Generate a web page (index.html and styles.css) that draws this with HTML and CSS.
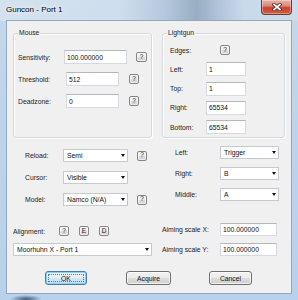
FILE: index.html
```html
<!DOCTYPE html>
<html>
<head>
<meta charset="utf-8">
<title>Guncon - Port 1</title>
<link rel="stylesheet" href="styles.css">
</head>
<body>
<div class="window">
  <div class="titlebar">
    <span class="title">Guncon - Port 1</span>
    <div class="close">
      <svg width="10" height="8" viewBox="0 0 10 8">
        <path d="M2 1.5 L8 6.5 M8 1.5 L2 6.5" stroke="#5a2a22" stroke-width="3.4" stroke-linecap="square" fill="none"/>
        <path d="M2 1.5 L8 6.5 M8 1.5 L2 6.5" stroke="#ffffff" stroke-width="1.7" stroke-linecap="square" fill="none"/>
      </svg>
    </div>
  </div>
  <div class="client">
    <div class="groups">
      <div class="group mouse">
        <span class="legend">Mouse</span>
        <div class="rows rows-mouse">
          <div class="row h14"><span class="lbl lw46">Sensitivity:</span><div class="edit w63">100.000000</div><div class="q q-wide ml9">?</div></div>
          <div class="row h14"><span class="lbl lw48">Threshold:</span><div class="edit w53">512</div><div class="q ml10">?</div></div>
          <div class="row h14"><span class="lbl lw48">Deadzone:</span><div class="edit w53">0</div><div class="q ml10">?</div></div>
        </div>
      </div>
      <div class="group lightgun">
        <span class="legend">Lightgun</span>
        <div class="rows rows-light">
          <div class="row h14"><span class="lbl lw36">Edges:</span><div class="q ml14">?</div></div>
          <div class="row h14"><span class="lbl lw36">Left:</span><div class="edit w40">1</div></div>
          <div class="row h14"><span class="lbl lw36">Top:</span><div class="edit w40">1</div></div>
          <div class="row h14"><span class="lbl lw36">Right:</span><div class="edit w40">65534</div></div>
          <div class="row h14"><span class="lbl lw36">Bottom:</span><div class="edit w40">65534</div></div>
        </div>
      </div>
    </div>

    <div class="lower">
      <div class="block-left">
        <div class="row h13"><span class="lbl lw38">Reload:</span><div class="combo w65"><span>Semi</span><span class="arr"></span></div><div class="q ml9">?</div></div>
        <div class="row h13"><span class="lbl lw38">Cursor:</span><div class="combo w65"><span>Visible</span><span class="arr"></span></div></div>
        <div class="row h13"><span class="lbl lw38">Model:</span><div class="combo w65"><span>Namco (N/A)</span><span class="arr"></span></div><div class="q ml9">?</div></div>
      </div>
      <div class="block-right">
        <div class="row h13"><span class="lbl lw45">Left:</span><div class="combo w59"><span>Trigger</span><span class="arr"></span></div></div>
        <div class="row h13"><span class="lbl lw45">Right:</span><div class="combo w59"><span>B</span><span class="arr"></span></div></div>
        <div class="row h13"><span class="lbl lw45">Middle:</span><div class="combo w59"><span>A</span><span class="arr"></span></div></div>
      </div>

      <div class="align-row">
        <span class="lbl lw46">Alignment:</span>
        <div class="q">?</div>
        <div class="q ml10">E</div>
        <div class="q ml10">D</div>
      </div>
      <div class="row h13 rowb"><span class="lbl lw58">Aiming scale X:</span><div class="edit w57">100.000000</div></div>

      <div class="combo w139 rowc"><span>Moorhuhn X - Port 1</span><span class="arr"></span></div>
      <div class="row h13 rowc"><span class="lbl lw58">Aiming scale Y:</span><div class="edit w57">100.000000</div></div>
    </div>

    <div class="buttons">
      <div class="btn btn-default w42"><span class="focus">OK</span></div>
      <div class="btn w45 ml39">Acquire</div>
      <div class="btn w43 ml38">Cancel</div>
    </div>
  </div>
</div>
</body>
</html>
```

FILE: styles.css
```css
* { box-sizing: border-box; }
html, body { margin: 0; padding: 0; }
body {
  width: 298px;
  height: 300px;
  overflow: hidden;
  font-family: "Liberation Sans", Arial, sans-serif;
  background: #bed5ec;
}

.window {
  width: 298px;
  height: 300px;
  padding: 0 7px 7px 7px;
  display: flex;
  flex-direction: column;
  background:
    radial-gradient(ellipse 16px 4px at 26px 299px, rgba(30, 50, 85, 0.75), rgba(30, 50, 85, 0) 100%),
    linear-gradient(180deg, #c6d8ea 0%, #bdd4ec 40%, #b8d1ec 100%);
}

.titlebar {
  height: 21px;
  margin: 0 -7px;
  padding: 0 6px 0 6px;
  display: flex;
  justify-content: space-between;
  align-items: flex-start;
  background: linear-gradient(90deg,
    rgba(255,255,255,0.25) 0%,
    rgba(255,255,255,0.15) 40%,
    rgba(70,95,125,0.12) 55%,
    rgba(50,75,105,0.30) 66%,
    rgba(70,95,125,0.15) 74%,
    rgba(255,255,255,0.05) 82%,
    rgba(255,255,255,0.1) 100%);
}

.title {
  font-size: 8px;
  line-height: 8px;
  margin-top: 6px;
  color: #000;
  text-shadow: 0 0 4px #fff, 0 0 6px #fff;
  white-space: nowrap;
}

.close {
  width: 31px;
  height: 15px;
  border: 1px solid #6a3a33;
  border-top: none;
  border-radius: 0 0 4px 4px;
  background: linear-gradient(180deg, #eab3a6 0%, #dc8878 42%, #c8432f 55%, #d35c3f 100%);
  box-shadow: inset 0 0 0 1px rgba(255,255,255,0.35);
  display: flex;
  align-items: center;
  justify-content: center;
}
.close svg { display: block; }

.client {
  width: 284px;
  height: 272px;
  background: #f0f0f0;
  box-shadow: 0 0 0 1px #93a8bf;
  display: flex;
  flex-direction: column;
}

/* group boxes */
.groups {
  display: flex;
  margin-top: 12px;
  padding-left: 6px;
  gap: 10px;
}
.group {
  position: relative;
  height: 105px;
  border: 1px solid #d3d9de;
  border-radius: 3px;
  box-shadow: inset 1px 1px 0 #fff, 1px 1px 0 #fff;
}
.mouse { width: 139px; padding: 16px 0 0 4px; }
.lightgun { width: 123px; padding: 9px 0 0 7px; }
.legend {
  position: absolute;
  top: -5px;
  left: 4px;
  padding: 0 1px;
  background: #f0f0f0;
  font-size: 6.8px;
  line-height: 8px;
  color: #222;
  white-space: nowrap;
}

.rows { display: flex; flex-direction: column; }
.rows-mouse { gap: 8px; }
.rows-light { gap: 5.3px; }

.row { display: flex; align-items: center; }
.h14 { height: 14px; }
.h13 { height: 13px; }

.lbl {
  font-size: 6.8px;
  color: #222;
  white-space: nowrap;
  flex: none;
}
.lw36 { width: 36px; }
.lw38 { width: 38px; }
.lw45 { width: 45px; }
.lw46 { width: 46px; }
.lw48 { width: 48px; }
.lw58 { width: 58px; }

.edit {
  height: 14px;
  background: #fff;
  border: 1px solid #d6d9e0;
  border-top-color: #b4b7bf;
  font-size: 6.8px;
  color: #111;
  padding-left: 2px;
  display: flex;
  align-items: center;
  white-space: nowrap;
  flex: none;
}
.lower .edit { height: 13px; }

.combo {
  height: 13px;
  background: #fff;
  border: 1px solid #c6c9d0;
  font-size: 6.8px;
  color: #111;
  padding: 0 2px 0 3px;
  display: flex;
  align-items: center;
  white-space: nowrap;
  flex: none;
}
.arr {
  margin-left: auto;
  width: 0;
  height: 0;
  border-left: 2.5px solid transparent;
  border-right: 2.5px solid transparent;
  border-top: 3px solid #111;
}

.w40 { width: 40px; }
.w42 { width: 42px; }
.w43 { width: 43px; }
.w45 { width: 45px; }
.w53 { width: 53px; }
.w57 { width: 57px; }
.w59 { width: 59px; }
.w63 { width: 63px; }
.w65 { width: 65px; }
.w139 { width: 139px; }

.ml9 { margin-left: 9px; }
.ml10 { margin-left: 10px; }
.ml14 { margin-left: 14px; }
.ml38 { margin-left: 38px; }
.ml39 { margin-left: 39px; }

/* small ? / E / D buttons */
.q {
  width: 10px;
  height: 10px;
  flex: none;
  border: 1px solid #858585;
  border-radius: 2px;
  background: linear-gradient(180deg, #f7f7f7 0%, #ececec 50%, #dcdcdc 51%, #d2d2d2 100%);
  box-shadow: inset 0 0 0 1px rgba(255,255,255,0.6);
  font-size: 6.5px;
  line-height: 1;
  color: #222;
  display: flex;
  align-items: center;
  justify-content: center;
}
.q-wide { width: 11px; }

/* lower section */
.lower {
  margin-top: 8px;
  padding-left: 6px;
  display: grid;
  grid-template-columns: 149px 129px;
}
.block-left {
  height: 61px;
  padding: 3px 0 0 12px;
  display: flex;
  flex-direction: column;
  gap: 9px;
}
.block-right {
  height: 61px;
  padding-left: 13px;
  display: flex;
  flex-direction: column;
  gap: 8px;
}
.align-row {
  margin-top: 16px;
  height: 13px;
  padding-top: 3px;
  display: flex;
  align-items: center;
}
.rowb { margin-top: 16px; }
.rowc { margin-top: 7px; }

/* dialog buttons */
.buttons {
  margin-top: 15px;
  padding-left: 38px;
  display: flex;
}
.btn {
  height: 14px;
  flex: none;
  border: 1px solid #707070;
  border-radius: 3px;
  background: linear-gradient(180deg, #f2f2f2 0%, #ebebeb 50%, #dddddd 51%, #cfcfcf 100%);
  box-shadow: inset 0 0 0 1px rgba(255,255,255,0.7);
  font-size: 6.8px;
  color: #111;
  display: flex;
  align-items: center;
  justify-content: center;
}
.btn-default {
  border-color: #3c7fb1;
  background: linear-gradient(180deg, #eef6fc 0%, #e2eff9 50%, #d2e6f5 51%, #c6def1 100%);
  box-shadow: inset 0 0 0 1px #8fd0f0;
  padding: 2px;
}
.focus {
  width: 100%;
  height: 100%;
  border: 1px dotted #4a7da8;
  display: flex;
  align-items: center;
  justify-content: center;
}
```
